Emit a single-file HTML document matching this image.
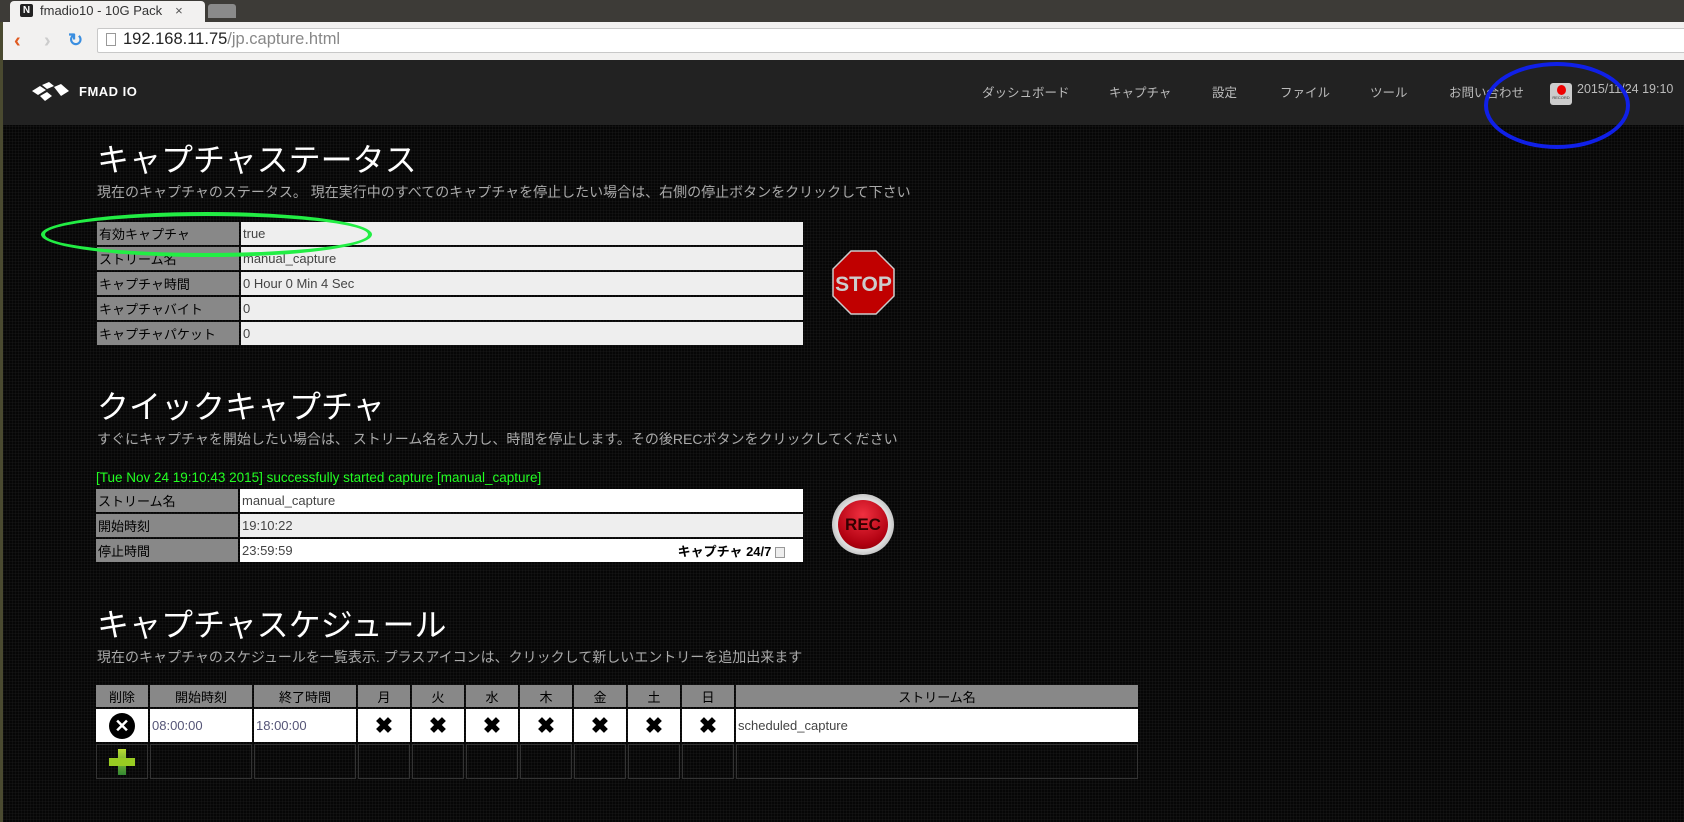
<!DOCTYPE html>
<html><head><meta charset="utf-8"><style>
*{margin:0;padding:0;box-sizing:border-box}
body{width:1684px;height:822px;overflow:hidden;background:#000;font-family:"Liberation Sans","Noto Sans CJK JP",sans-serif;position:relative}
.abs{position:absolute}
#page{position:absolute;left:3px;top:60px;right:0;bottom:0;background-color:#060606;background-image:linear-gradient(rgba(40,40,40,.22) 1px,transparent 1px),linear-gradient(90deg,rgba(40,40,40,.22) 1px,transparent 1px);background-size:3px 3px}
.h1{position:absolute;left:97px;color:#fff;font-size:32px;line-height:34px;font-weight:normal;white-space:nowrap}
.sub{position:absolute;left:97px;color:#aaa;font-size:14px;white-space:nowrap}
table{border-collapse:separate;border-spacing:2px;position:absolute}
td{font-size:13px;padding:0 2px;white-space:nowrap;color:#333}
td.l{background:#888;color:#000;width:142px}
td.v{background:#eee;color:#444}
.nav{position:absolute;top:82px;color:#bbb;font-size:12.5px;white-space:nowrap}
.sch td{border:none}
</style></head><body>
<div class="abs" style="left:0;top:0;width:1684px;height:22px;background:#3d3b37"></div>
<div class="abs" style="left:10px;top:1px;width:195px;height:21px;background:#f2f1f0;border-radius:4px 4px 0 0"></div>
<div class="abs" style="left:20px;top:4px;width:13px;height:13px;background:#222;border-radius:2px;color:#fff;font-size:10px;font-weight:bold;text-align:center;line-height:13px">N</div>
<div class="abs" style="left:40px;top:3px;font-size:13px;color:#333;white-space:nowrap">fmadio10 - 10G Pack<span style="color:#555;margin-left:13px">×</span></div>
<div class="abs" style="left:208px;top:4px;width:28px;height:14px;background:#8a8a8a;border-radius:3px 3px 0 0"></div>
<div class="abs" style="left:0;top:22px;width:1684px;height:38px;background:#f2f1f0"></div>
<div class="abs" style="left:14px;top:30px;font-size:20px;color:#e05a20;font-weight:bold">‹</div>
<div class="abs" style="left:44px;top:30px;font-size:20px;color:#ccc;font-weight:bold">›</div>
<div class="abs" style="left:68px;top:30px;font-size:18px;color:#3a8ee0;font-weight:bold">↻</div>
<div class="abs" style="left:97px;top:28px;width:1590px;height:25px;background:#fff;border:1px solid #c8c8c8;border-radius:2px"></div>
<div class="abs" style="left:106px;top:33px;width:10px;height:13px;border:1px solid #999;background:#fff"></div>
<div class="abs" style="left:123px;top:30px;font-size:16.5px;color:#222;white-space:nowrap">192.168.11.75<span style="color:#888">/jp.capture.html</span></div>
<div class="abs" style="left:0;top:22px;width:3px;height:800px;background:#4a4a30"></div>
<div id="page"></div>
<div class="abs" style="left:3px;top:60px;width:1681px;height:65px;background:#222"></div>
<svg class="abs" style="left:32px;top:82px" width="40" height="20" viewBox="0 0 40 20"><polygon points="0,9 8,4 14,8 6,13" fill="#fff"/><polygon points="10,3 17,0 22,4 15,7" fill="#fff"/><polygon points="8,14 15,10 20,14 13,19" fill="#fff"/><polygon points="22,5 29,2 37,9 29,14" fill="#fff"/></svg>
<div class="abs" style="left:79px;top:84px;color:#fff;font-size:13px;font-weight:bold;letter-spacing:.5px">FMAD IO</div>
<div class="nav" style="left:982px">ダッシュボード</div>
<div class="nav" style="left:1109px">キャプチャ</div>
<div class="nav" style="left:1212px">設定</div>
<div class="nav" style="left:1280px">ファイル</div>
<div class="nav" style="left:1370px">ツール</div>
<div class="nav" style="left:1449px">お問い合わせ</div>
<div class="abs" style="left:1550px;top:83px;width:22px;height:22px;background:#ccc;border-radius:3px"><div style="width:9px;height:10px;background:#e00;border-radius:50%;margin:2px auto 0"></div><div style="font-size:4px;text-align:center;color:#333">RECORD</div></div>
<div class="nav" style="left:1577px">2015/11/24 19:10</div>
<div class="abs" style="left:1484px;top:62px;width:146px;height:87px;border:4px solid #1020e8;border-radius:50%"></div>

<div class="h1" style="top:143px">キャプチャステータス</div>
<div class="sub" style="top:182px">現在のキャプチャのステータス。 現在実行中のすべてのキャプチャを停止したい場合は、右側の停止ボタンをクリックして下さい</div>
<table style="left:95px;top:220px;width:710px">
<tr style="height:23px"><td class="l">有効キャプチャ</td><td class="v">true</td></tr>
<tr style="height:23px"><td class="l">ストリーム名</td><td class="v">manual_capture</td></tr>
<tr style="height:23px"><td class="l">キャプチャ時間</td><td class="v">0 Hour 0 Min 4 Sec</td></tr>
<tr style="height:23px"><td class="l">キャプチャバイト</td><td class="v">0</td></tr>
<tr style="height:23px"><td class="l">キャプチャパケット</td><td class="v">0</td></tr>
</table>
<div class="abs" style="left:41px;top:212px;width:331px;height:45px;border:4px solid #22ee44;border-radius:50%"></div>
<svg class="abs" style="left:832px;top:250px" width="63" height="65" viewBox="0 0 63 65"><polygon points="19,1 44,1 62,19 62,46 44,64 19,64 1,46 1,19" fill="#c00000" stroke="#ccc" stroke-width="1.5"/><text x="31.5" y="41" text-anchor="middle" font-family="Liberation Sans" font-weight="bold" font-size="21" fill="#ccc">STOP</text></svg>

<div class="h1" style="top:390px">クイックキャプチャ</div>
<div class="sub" style="top:429px">すぐにキャプチャを開始したい場合は、 ストリーム名を入力し、時間を停止します。その後RECボタンをクリックしてください</div>
<div class="abs" style="left:96px;top:470px;color:#2f2;font-size:13.5px;white-space:nowrap">[Tue Nov 24 19:10:43 2015] successfully started capture [manual_capture]</div>
<table style="left:94px;top:487px;width:711px">
<tr style="height:23px"><td class="l">ストリーム名</td><td class="v" style="background:#fff">manual_capture</td></tr>
<tr style="height:23px"><td class="l">開始時刻</td><td class="v">19:10:22</td></tr>
<tr style="height:23px"><td class="l">停止時間</td><td class="v" style="background:#fff"><div style="display:flex;justify-content:space-between;align-items:center"><span>23:59:59</span><span style="color:#000;font-weight:bold;margin-right:16px">キャプチャ 24/7 <span style="display:inline-block;width:10px;height:11px;border:1px solid #999;background:#eee;vertical-align:middle"></span></span></div></td></tr>
</table>
<div class="abs" style="left:832px;top:494px;width:62px;height:61px;border-radius:50%;background:radial-gradient(circle,#ddd 60%,#888 100%)"></div>
<div class="abs" style="left:838px;top:500px;width:50px;height:49px;border-radius:50%;background:radial-gradient(circle at 50% 30%,#f03040,#b00010 70%,#700);text-align:center;line-height:49px;font-weight:bold;font-size:17px;color:#300">REC</div>

<div class="h1" style="top:608px">キャプチャスケジュール</div>
<div class="sub" style="top:647px">現在のキャプチャのスケジュールを一覧表示. プラスアイコンは、クリックして新しいエントリーを追加出来ます</div>
<table class="sch" style="left:94px;top:683px;width:1046px">
<tr style="height:22px;background:#888;text-align:center"><td style="width:52px;color:#000;text-align:center">削除</td><td style="width:102px;color:#000;text-align:center;background:#888">開始時刻</td><td style="width:102px;color:#000;text-align:center;background:#888">終了時間</td><td style="width:52px;text-align:center;color:#000;background:#888">月</td><td style="width:52px;text-align:center;color:#000;background:#888">火</td><td style="width:52px;text-align:center;color:#000;background:#888">水</td><td style="width:52px;text-align:center;color:#000;background:#888">木</td><td style="width:52px;text-align:center;color:#000;background:#888">金</td><td style="width:52px;text-align:center;color:#000;background:#888">土</td><td style="width:52px;text-align:center;color:#000;background:#888">日</td><td style="text-align:center;color:#000;background:#888">ストリーム名</td></tr>
<tr style="height:33px;background:#fff"><td style="background:#fff;text-align:center"><span style="display:inline-block;width:26px;height:26px;border-radius:50%;background:#000;color:#fff;font-weight:bold;font-size:18px;line-height:26px">✕</span></td><td style="background:#fff;color:#557">08:00:00</td><td style="background:#fff;color:#557">18:00:00</td>
<td style="background:#fff;text-align:center;font-size:22px;font-weight:bold;color:#000">✖</td><td style="background:#fff;text-align:center;font-size:22px;font-weight:bold;color:#000">✖</td><td style="background:#fff;text-align:center;font-size:22px;font-weight:bold;color:#000">✖</td><td style="background:#fff;text-align:center;font-size:22px;font-weight:bold;color:#000">✖</td><td style="background:#fff;text-align:center;font-size:22px;font-weight:bold;color:#000">✖</td><td style="background:#fff;text-align:center;font-size:22px;font-weight:bold;color:#000">✖</td><td style="background:#fff;text-align:center;font-size:22px;font-weight:bold;color:#000">✖</td><td style="background:#fff;color:#444">scheduled_capture</td></tr>
<tr style="height:35px"><td style="border:1px solid #333;text-align:center"><span style="display:inline-block;position:relative;width:26px;height:26px;vertical-align:middle"><span style="position:absolute;left:9px;top:0;width:8px;height:26px;background:linear-gradient(#bd3,#383)"></span><span style="position:absolute;left:0;top:9px;width:26px;height:8px;background:#9c2"></span></span></td><td style="border:1px solid #333"></td><td style="border:1px solid #333"></td><td style="border:1px solid #333"></td><td style="border:1px solid #333"></td><td style="border:1px solid #333"></td><td style="border:1px solid #333"></td><td style="border:1px solid #333"></td><td style="border:1px solid #333"></td><td style="border:1px solid #333"></td><td style="border:1px solid #333"></td></tr>
</table>
</body></html>
